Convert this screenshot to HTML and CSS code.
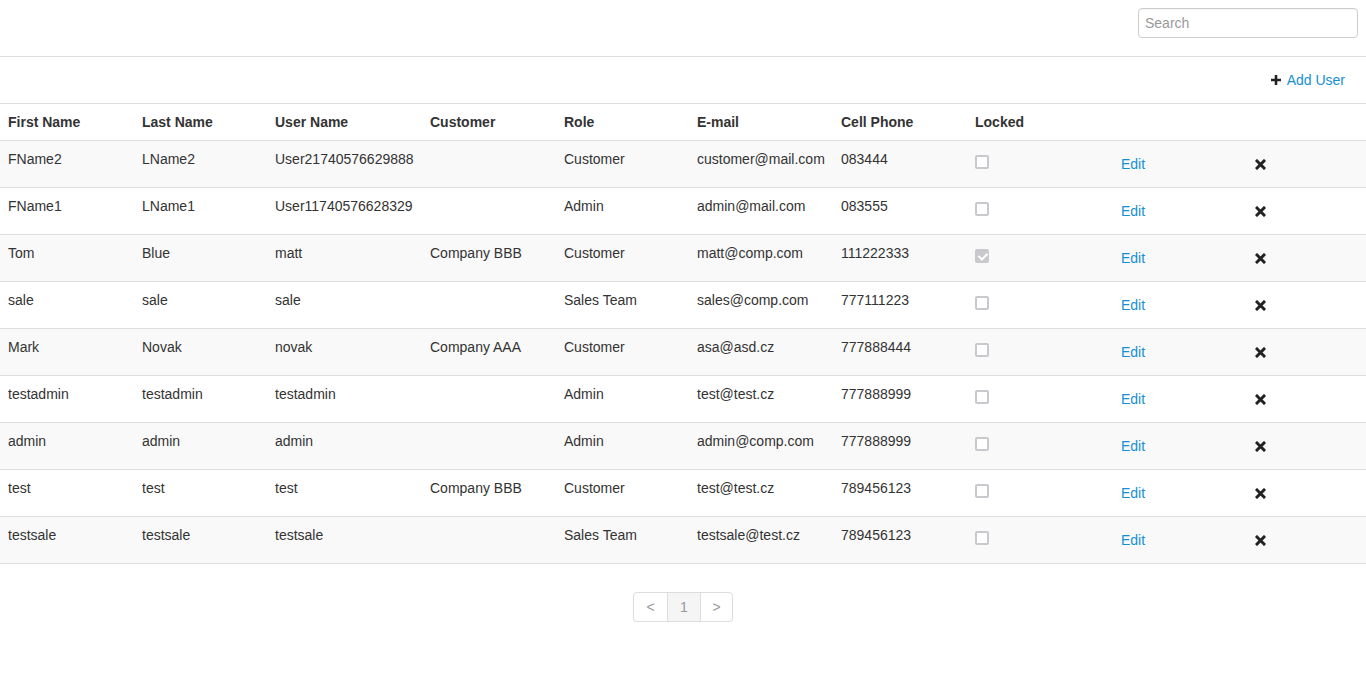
FILE: index.html
```html
<!DOCTYPE html>
<html>
<head>
<meta charset="utf-8">
<link rel="stylesheet" href="styles.css">
</head>
<body>
<header class="topbar">
  <input class="search" type="text" placeholder="Search">
</header>
<div class="toolbar">
  <a class="add-link" href="#"><svg class="plus" width="10" height="10" viewBox="0 0 10 10"><path d="M3.7 0h2.6v3.7H10v2.6H6.3V10H3.7V6.3H0V3.7h3.7z" fill="#222"/></svg>Add User</a>
</div>
<table class="users">
  <colgroup>
    <col class="w134"><col class="w133"><col class="w155"><col class="w134"><col class="w133"><col class="w144"><col class="w134"><col class="w134"><col class="w134"><col>
  </colgroup>
  <thead>
    <tr><th>First Name</th><th>Last Name</th><th>User Name</th><th>Customer</th><th>Role</th><th>E-mail</th><th>Cell Phone</th><th>Locked</th><th></th><th></th></tr>
  </thead>
  <tbody>
    <tr><td>FName2</td><td>LName2</td><td>User21740576629888</td><td></td><td>Customer</td><td>customer@mail.com</td><td>083444</td><td><input class="chk" type="checkbox" disabled></td><td><a class="btn-link" href="#">Edit</a></td><td><span class="btn-icon"><svg width="11" height="11" viewBox="0 0 11 11"><path d="M2 2l7 7M9 2L2 9" stroke="#222" stroke-width="3" stroke-linecap="square"/></svg></span></td></tr>
    <tr><td>FName1</td><td>LName1</td><td>User11740576628329</td><td></td><td>Admin</td><td>admin@mail.com</td><td>083555</td><td><input class="chk" type="checkbox" disabled></td><td><a class="btn-link" href="#">Edit</a></td><td><span class="btn-icon"><svg width="11" height="11" viewBox="0 0 11 11"><path d="M2 2l7 7M9 2L2 9" stroke="#222" stroke-width="3" stroke-linecap="square"/></svg></span></td></tr>
    <tr><td>Tom</td><td>Blue</td><td>matt</td><td>Company BBB</td><td>Customer</td><td>matt@comp.com</td><td>111222333</td><td><input class="chk" type="checkbox" disabled checked></td><td><a class="btn-link" href="#">Edit</a></td><td><span class="btn-icon"><svg width="11" height="11" viewBox="0 0 11 11"><path d="M2 2l7 7M9 2L2 9" stroke="#222" stroke-width="3" stroke-linecap="square"/></svg></span></td></tr>
    <tr><td>sale</td><td>sale</td><td>sale</td><td></td><td>Sales Team</td><td>sales@comp.com</td><td>777111223</td><td><input class="chk" type="checkbox" disabled></td><td><a class="btn-link" href="#">Edit</a></td><td><span class="btn-icon"><svg width="11" height="11" viewBox="0 0 11 11"><path d="M2 2l7 7M9 2L2 9" stroke="#222" stroke-width="3" stroke-linecap="square"/></svg></span></td></tr>
    <tr><td>Mark</td><td>Novak</td><td>novak</td><td>Company AAA</td><td>Customer</td><td>asa@asd.cz</td><td>777888444</td><td><input class="chk" type="checkbox" disabled></td><td><a class="btn-link" href="#">Edit</a></td><td><span class="btn-icon"><svg width="11" height="11" viewBox="0 0 11 11"><path d="M2 2l7 7M9 2L2 9" stroke="#222" stroke-width="3" stroke-linecap="square"/></svg></span></td></tr>
    <tr><td>testadmin</td><td>testadmin</td><td>testadmin</td><td></td><td>Admin</td><td>test@test.cz</td><td>777888999</td><td><input class="chk" type="checkbox" disabled></td><td><a class="btn-link" href="#">Edit</a></td><td><span class="btn-icon"><svg width="11" height="11" viewBox="0 0 11 11"><path d="M2 2l7 7M9 2L2 9" stroke="#222" stroke-width="3" stroke-linecap="square"/></svg></span></td></tr>
    <tr><td>admin</td><td>admin</td><td>admin</td><td></td><td>Admin</td><td>admin@comp.com</td><td>777888999</td><td><input class="chk" type="checkbox" disabled></td><td><a class="btn-link" href="#">Edit</a></td><td><span class="btn-icon"><svg width="11" height="11" viewBox="0 0 11 11"><path d="M2 2l7 7M9 2L2 9" stroke="#222" stroke-width="3" stroke-linecap="square"/></svg></span></td></tr>
    <tr><td>test</td><td>test</td><td>test</td><td>Company BBB</td><td>Customer</td><td>test@test.cz</td><td>789456123</td><td><input class="chk" type="checkbox" disabled></td><td><a class="btn-link" href="#">Edit</a></td><td><span class="btn-icon"><svg width="11" height="11" viewBox="0 0 11 11"><path d="M2 2l7 7M9 2L2 9" stroke="#222" stroke-width="3" stroke-linecap="square"/></svg></span></td></tr>
    <tr><td>testsale</td><td>testsale</td><td>testsale</td><td></td><td>Sales Team</td><td>testsale@test.cz</td><td>789456123</td><td><input class="chk" type="checkbox" disabled></td><td><a class="btn-link" href="#">Edit</a></td><td><span class="btn-icon"><svg width="11" height="11" viewBox="0 0 11 11"><path d="M2 2l7 7M9 2L2 9" stroke="#222" stroke-width="3" stroke-linecap="square"/></svg></span></td></tr>
  </tbody>
</table>
<nav class="pager">
  <ul class="pagination">
    <li class="page">&lt;</li>
    <li class="page active">1</li>
    <li class="page">&gt;</li>
  </ul>
</nav>
</body>
</html>
```
FILE: styles.css
```css
* { box-sizing: border-box; }
html, body { margin: 0; padding: 0; background: #fff; }
body {
  font-family: "Liberation Sans", Arial, sans-serif;
  font-size: 14px;
  line-height: 20px;
  color: #333;
}
.topbar {
  display: flex;
  justify-content: flex-end;
  height: 57px;
  padding: 8px 8px 0 0;
  border-bottom: 1px solid #ddd;
}
.search {
  width: 220px;
  height: 30px;
  padding: 5px 6px;
  border: 1px solid #ccc;
  border-radius: 4px;
  font-family: inherit;
  font-size: 14px;
  color: #555;
  outline: none;
  box-shadow: inset 0 1px 1px rgba(0,0,0,.04);
}
.search::placeholder { color: #999; }
.toolbar {
  display: flex;
  justify-content: flex-end;
  align-items: flex-start;
  height: 46px;
  padding: 13px 21px 0 0;
}
.add-link {
  display: flex;
  align-items: center;
  gap: 6px;
  color: #168fd4;
  text-decoration: none;
  font-size: 14px;
  line-height: 20px;
}
.plus { display: block; }
.users {
  width: 100%;
  border-collapse: collapse;
  table-layout: fixed;
  border-top: 1px solid #ddd;
}
.w134 { width: 134px; }
.w133 { width: 133px; }
.w155 { width: 155px; }
.w144 { width: 144px; }
.users th {
  text-align: left;
  font-weight: bold;
  color: #333;
  padding: 8px;
  height: 36px;
  border-bottom: 1px solid #ddd;
  white-space: nowrap;
}
.users td {
  padding: 8px;
  vertical-align: top;
  border-bottom: 1px solid #ddd;
  white-space: nowrap;
  height: 47px;
}
.users tbody tr:nth-child(odd) { background: #f9f9f9; }
.chk {
  appearance: none;
  -webkit-appearance: none;
  display: block;
  margin: 6px 0 0 0;
  width: 14px;
  height: 14px;
  border: 2px solid #c9c9cd;
  border-radius: 2px;
  background: #fff;
  position: relative;
}
.chk:checked {
  background: #c9c9cd;
}
.chk:checked::after {
  content: "";
  position: absolute;
  left: 3px;
  top: 0px;
  width: 4px;
  height: 7px;
  border: solid #fff;
  border-width: 0 2px 2px 0;
  transform: rotate(45deg);
}
.btn-link {
  display: inline-block;
  padding: 5px 12px;
  color: #168fd4;
  text-decoration: none;
  line-height: 20px;
}
.btn-icon {
  display: inline-flex;
  align-items: center;
  height: 30px;
  padding: 0 12px 0 12px;
}
.btn-icon svg { display: block; margin-top: 1px; }
.pager {
  display: flex;
  justify-content: center;
  margin-top: 28px;
}
.pagination {
  display: flex;
  list-style: none;
  margin: 0;
  padding: 0;
  border: 1px solid #ddd;
  border-radius: 4px;
  box-shadow: 0 1px 2px rgba(0,0,0,.05);
}
.page {
  width: 33px;
  height: 28px;
  line-height: 28px;
  text-align: center;
  color: #999;
  font-size: 14px;
}
.page:last-child { width: 32px; }
.page + .page { border-left: 1px solid #ddd; }
.page.active { background: #f5f5f5; }
```
